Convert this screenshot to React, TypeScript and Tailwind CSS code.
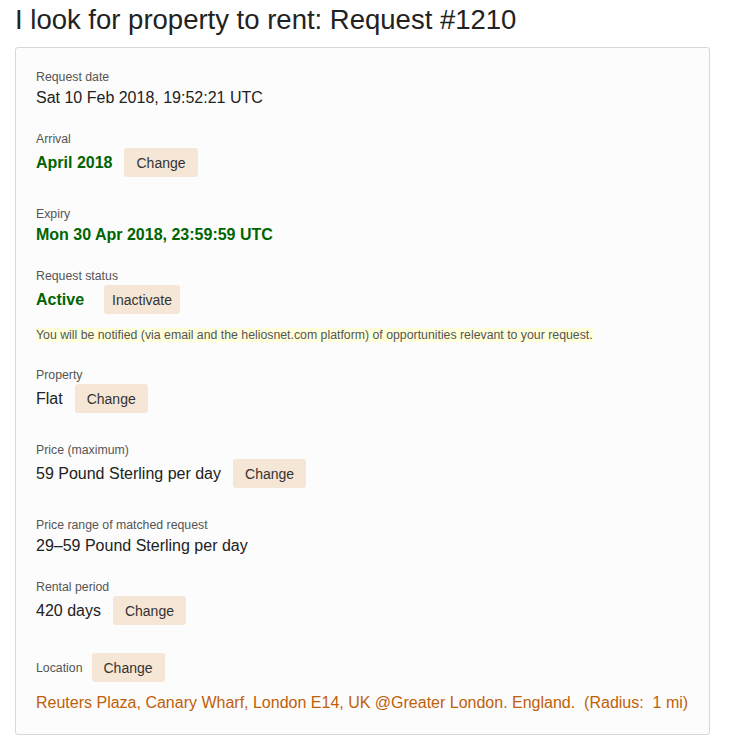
import React from 'react';

const font = { fontFamily: '"Liberation Sans", Arial, sans-serif' };

function ChangeButton({ label = 'Change', narrow = false }: { label?: string; narrow?: boolean }) {
  return (
    <button
      type="button"
      className={`h-[29px] rounded-[3px] bg-[#f5e6d6] text-[14px] leading-[18px] text-[#333] ${narrow ? 'px-2' : 'px-3'}`}
    >
      {label}
    </button>
  );
}

function Label({ children }: { children: React.ReactNode }) {
  return <div className="text-[12.3px] leading-[14px] text-[#555]">{children}</div>;
}

export default function App() {
  return (
    <div className="bg-white w-[739px] h-[742px] text-[#222]" style={font}>
      <h1 className="pl-[15px] pt-[3px] text-[27.5px] leading-[34px] text-[#222]">
        I look for property to rent: Request #1210
      </h1>

      <div className="mx-[15px] mt-[10px] w-[695px] border border-[#d8d8d8] rounded-[3px] bg-[#fcfcfc] px-5 pt-[22px] pb-[20px]">
        <div className="mb-[23px]">
          <Label>Request date</Label>
          <div className="mt-[3px] text-[16px] leading-[22px]">Sat 10 Feb 2018, 19:52:21 UTC</div>
        </div>

        <div className="mb-[30px]">
          <Label>Arrival</Label>
          <div className="mt-[2px] flex items-center gap-3">
            <span className="text-[16px] font-bold text-[#006400]">April 2018</span>
            <ChangeButton />
          </div>
        </div>

        <div className="mb-[23px]">
          <Label>Expiry</Label>
          <div className="mt-[3px] text-[16px] leading-[22px] font-bold text-[#006400]">
            Mon 30 Apr 2018, 23:59:59 UTC
          </div>
        </div>

        <div className="mb-[13px]">
          <Label>Request status</Label>
          <div className="mt-[2px] flex items-center gap-5">
            <span className="text-[16px] font-bold text-[#006400]">Active</span>
            <ChangeButton label="Inactivate" narrow />
          </div>
        </div>

        <div className="mb-[25px] text-[12.3px] leading-[16px]">
          <span className="bg-[#ffffdc] text-[#555]">
            You will be notified (via email and the heliosnet.com platform) of opportunities relevant to your request.
          </span>
        </div>

        <div className="mb-[30px]">
          <Label>Property</Label>
          <div className="mt-[2px] flex items-center gap-3">
            <span className="text-[16px]">Flat</span>
            <ChangeButton />
          </div>
        </div>

        <div className="mb-[30px]">
          <Label>Price (maximum)</Label>
          <div className="mt-[2px] flex items-center gap-3">
            <span className="text-[16px]">59 Pound Sterling per day</span>
            <ChangeButton />
          </div>
        </div>

        <div className="mb-[23px]">
          <Label>Price range of matched request</Label>
          <div className="mt-[3px] text-[16px] leading-[22px]">29–59 Pound Sterling per day</div>
        </div>

        <div className="mb-[28px]">
          <Label>Rental period</Label>
          <div className="mt-[2px] flex items-center gap-3">
            <span className="text-[16px]">420 days</span>
            <ChangeButton />
          </div>
        </div>

        <div className="flex items-center gap-[9px]">
          <Label>Location</Label>
          <ChangeButton />
        </div>

        <div className="mt-[10px] text-[16px] leading-[22px] text-[#c0600a] whitespace-pre">
          Reuters Plaza, Canary Wharf, London E14, UK @Greater London. England.  (Radius:  1 mi)
        </div>
      </div>
    </div>
  );
}
